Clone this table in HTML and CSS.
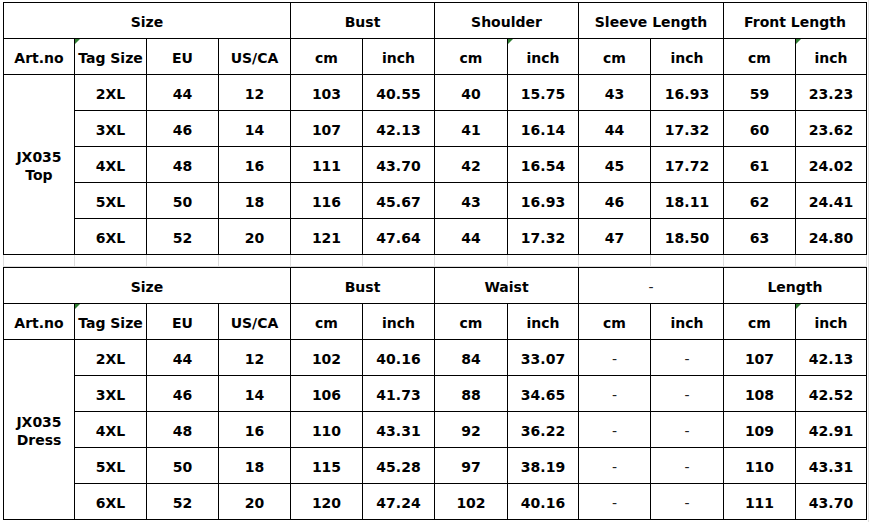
FILE: index.html
```html
<!DOCTYPE html>
<html>
<head>
<meta charset="utf-8">
<link rel="stylesheet" href="styles.css">
</head>
<body>
<div class="sheet">
  <div class="grid">
    <div class="c h span4">Size</div>
    <div class="c h span2">Bust</div>
    <div class="c h span2">Shoulder</div>
    <div class="c h span2">Sleeve Length</div>
    <div class="c h span2">Front Length</div>

    <div class="c">Art.no</div>
    <div class="c flag">Tag Size</div>
    <div class="c">EU</div>
    <div class="c">US/CA</div>
    <div class="c">cm</div>
    <div class="c">inch</div>
    <div class="c">cm</div>
    <div class="c flag">inch</div>
    <div class="c">cm</div>
    <div class="c">inch</div>
    <div class="c">cm</div>
    <div class="c flag">inch</div>

    <div class="c art">JX035<br>Top</div>
    <div class="c">2XL</div><div class="c">44</div><div class="c">12</div><div class="c">103</div><div class="c">40.55</div><div class="c">40</div><div class="c">15.75</div><div class="c">43</div><div class="c">16.93</div><div class="c">59</div><div class="c">23.23</div>
    <div class="c">3XL</div><div class="c">46</div><div class="c">14</div><div class="c">107</div><div class="c">42.13</div><div class="c">41</div><div class="c">16.14</div><div class="c">44</div><div class="c">17.32</div><div class="c">60</div><div class="c">23.62</div>
    <div class="c">4XL</div><div class="c">48</div><div class="c">16</div><div class="c">111</div><div class="c">43.70</div><div class="c">42</div><div class="c">16.54</div><div class="c">45</div><div class="c">17.72</div><div class="c">61</div><div class="c">24.02</div>
    <div class="c">5XL</div><div class="c">50</div><div class="c">18</div><div class="c">116</div><div class="c">45.67</div><div class="c">43</div><div class="c">16.93</div><div class="c">46</div><div class="c">18.11</div><div class="c">62</div><div class="c">24.41</div>
    <div class="c">6XL</div><div class="c">52</div><div class="c">20</div><div class="c">121</div><div class="c">47.64</div><div class="c">44</div><div class="c">17.32</div><div class="c">47</div><div class="c">18.50</div><div class="c">63</div><div class="c">24.80</div>
  </div>

  <div class="gap">
    <div></div><div></div><div></div><div></div><div></div><div></div><div></div><div></div><div></div><div></div><div></div><div></div>
  </div>

  <div class="grid">
    <div class="c h span4">Size</div>
    <div class="c h span2">Bust</div>
    <div class="c h span2">Waist</div>
    <div class="c h span2 dash">-</div>
    <div class="c h span2">Length</div>

    <div class="c">Art.no</div>
    <div class="c flag">Tag Size</div>
    <div class="c">EU</div>
    <div class="c">US/CA</div>
    <div class="c">cm</div>
    <div class="c">inch</div>
    <div class="c">cm</div>
    <div class="c">inch</div>
    <div class="c">cm</div>
    <div class="c">inch</div>
    <div class="c">cm</div>
    <div class="c flag">inch</div>

    <div class="c art">JX035<br>Dress</div>
    <div class="c">2XL</div><div class="c">44</div><div class="c">12</div><div class="c">102</div><div class="c">40.16</div><div class="c">84</div><div class="c">33.07</div><div class="c dash">-</div><div class="c dash">-</div><div class="c">107</div><div class="c">42.13</div>
    <div class="c">3XL</div><div class="c">46</div><div class="c">14</div><div class="c">106</div><div class="c">41.73</div><div class="c">88</div><div class="c">34.65</div><div class="c dash">-</div><div class="c dash">-</div><div class="c">108</div><div class="c">42.52</div>
    <div class="c">4XL</div><div class="c">48</div><div class="c">16</div><div class="c">110</div><div class="c">43.31</div><div class="c">92</div><div class="c">36.22</div><div class="c dash">-</div><div class="c dash">-</div><div class="c">109</div><div class="c">42.91</div>
    <div class="c">5XL</div><div class="c">50</div><div class="c">18</div><div class="c">115</div><div class="c">45.28</div><div class="c">97</div><div class="c">38.19</div><div class="c dash">-</div><div class="c dash">-</div><div class="c">110</div><div class="c">43.31</div>
    <div class="c">6XL</div><div class="c">52</div><div class="c">20</div><div class="c">120</div><div class="c">47.24</div><div class="c">102</div><div class="c">40.16</div><div class="c dash">-</div><div class="c dash">-</div><div class="c">111</div><div class="c">43.70</div>
  </div>
</div>
</body>
</html>
```

FILE: styles.css
```css
html, body {
  margin: 0;
  padding: 0;
  background: #fff;
}

.sheet {
  padding: 2px 0 0 3px;
  min-height: 522px;
  box-sizing: border-box;
  font-family: "DejaVu Sans", Verdana, sans-serif;
  font-weight: bold;
  font-size: 14px;
  color: #000;
  background: linear-gradient(to right, transparent 868px, #e2e2e2 868px, #e2e2e2 869px);
}

.grid {
  display: grid;
  grid-template-columns: 70px 71px 71px 71px 71px 71px 72px 70px 71px 72px 71px 70px;
  grid-auto-rows: 35px;
  gap: 1px;
  padding: 1px;
  background: #000;
  width: max-content;
}

.c {
  position: relative;
  background: #fff;
  display: flex;
  align-items: center;
  justify-content: center;
  text-align: center;
  white-space: nowrap;
  padding-top: 2px;
  box-sizing: border-box;
}

.span4 { grid-column: span 4; }
.span2 { grid-column: span 2; }

.art {
  grid-row: span 5;
  line-height: 18px;
}

.dash {
  font-weight: normal;
  color: #222;
}

.flag::before {
  content: "";
  position: absolute;
  left: 0;
  top: 0;
  width: 0;
  height: 0;
  border-top: 5px solid #2f7d32;
  border-right: 5px solid transparent;
}

.gap {
  display: grid;
  grid-template-columns: 70px 71px 71px 71px 71px 71px 72px 70px 71px 72px 71px 70px;
  column-gap: 1px;
  padding: 0 1px 1px 1px;
  height: 12px;
  box-sizing: border-box;
  background: #dcdcdc;
  width: max-content;
}

.gap div {
  background: #fff;
}
```
